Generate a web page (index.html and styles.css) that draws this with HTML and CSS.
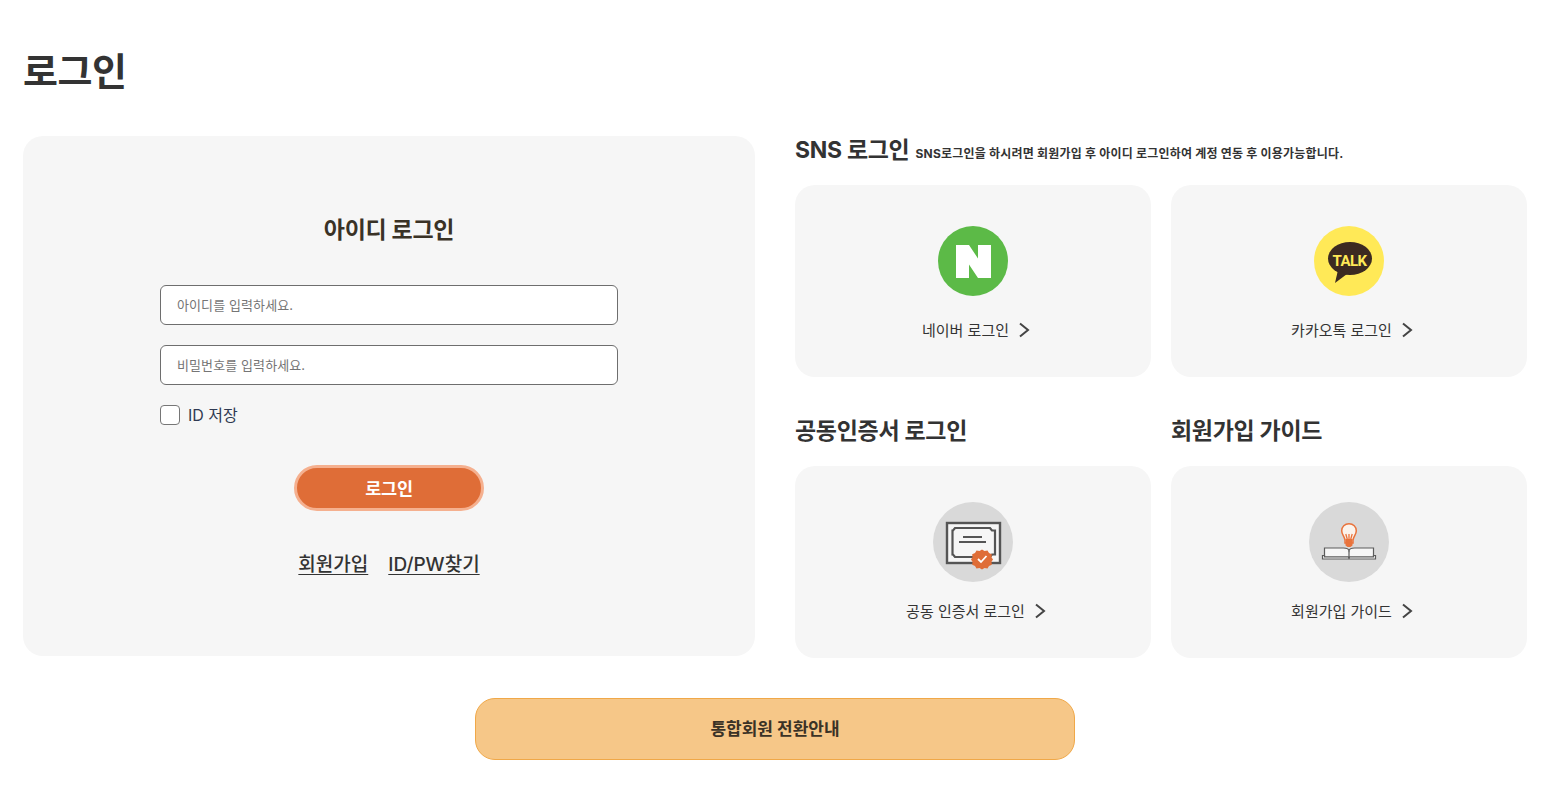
FILE: index.html
```html
<!DOCTYPE html>
<html lang="ko">
<head>
<meta charset="utf-8">
<title>로그인</title>
<link rel="stylesheet" href="styles.css">
</head>
<body>
<main class="page">
  <h1 class="page-title">로그인</h1>
  <div class="columns">
    <section class="login-card">
      <h2 class="login-title">아이디 로그인</h2>
      <form class="login-form">
        <input class="field" type="text" placeholder="아이디를 입력하세요.">
        <input class="field" type="password" placeholder="비밀번호를 입력하세요.">
        <label class="remember"><span class="check"></span><span class="remember-text">ID 저장</span></label>
        <button class="submit" type="button">로그인</button>
        <div class="links"><a href="#">회원가입</a><a href="#">ID/PW찾기</a></div>
      </form>
    </section>
    <section class="side">
      <div class="sns-head"><h2 class="side-title">SNS 로그인</h2><span class="sns-note">SNS로그인을 하시려면 회원가입 후 아이디 로그인하여 계정 연동 후 이용가능합니다.</span></div>
      <div class="tiles">
        <a class="tile" href="#">
          <svg class="logo" viewBox="0 0 70 70"><circle cx="35" cy="35" r="35" fill="#5cba47"/><path d="M18 19h13l9 13.500v-13.500h13v33h-13l-9-13.500v13.500h-13z" fill="#fff"/></svg>
          <span class="tile-label">네이버 로그인<svg class="chev" viewBox="0 0 12 16"><path d="M2 1.500l8 6.500-8 6.500" /></svg></span>
        </a>
        <a class="tile" href="#">
          <svg class="logo" viewBox="0 0 70 70"><circle cx="35" cy="35" r="35" fill="#ffe957"/><ellipse cx="36" cy="32.500" rx="22" ry="16.500" fill="#3c2a21"/><path d="M24 44l-3 13 12-9z" fill="#3c2a21"/><text class="talk" x="35.500" y="40" text-anchor="middle">TALK</text></svg>
          <span class="tile-label">카카오톡 로그인<svg class="chev" viewBox="0 0 12 16"><path d="M2 1.500l8 6.500-8 6.500" /></svg></span>
        </a>
      </div>
      <div class="heads">
        <h2 class="side-title">공동인증서 로그인</h2>
        <h2 class="side-title">회원가입 가이드</h2>
      </div>
      <div class="tiles">
        <a class="tile tile-cert" href="#">
          <svg class="logo-lg" viewBox="0 0 80 80">
            <circle cx="40" cy="40" r="40" fill="#d9d9d9"/>
            <rect x="14" y="21" width="53" height="40" fill="#f6f6f6" stroke="#555" stroke-width="2.400"/>
            <path d="M22 26h35l2 2.500h3v24h-3l-2 2.500h-35l-2-2.500h-.5v-24h.5z" fill="#f6f6f6" stroke="#555" stroke-width="2.200"/>
            <path d="M30 35h19M26 40h27" stroke="#555" stroke-width="2" fill="none"/>
            <path d="M49 47.500l2.500 1.500 3-.5 1.500 2.600 2.800 1.100-.3 3 1.500 2.300-1.500 2.300.3 3-2.800 1.100-1.500 2.600-3-.5-2.500 1.500-2.500-1.500-3 .5-1.500-2.600-2.800-1.100.3-3-1.500-2.300 1.500-2.300-.3-3 2.800-1.100 1.500-2.600 3 .5z" fill="#df6d37"/>
            <path d="M45 57l3 3 5.500-6" fill="none" stroke="#fff" stroke-width="1.800"/>
          </svg>
          <span class="tile-label">공동 인증서 로그인<svg class="chev" viewBox="0 0 12 16"><path d="M2 1.500l8 6.500-8 6.500" /></svg></span>
        </a>
        <a class="tile tile-guide" href="#">
          <svg class="logo-lg" viewBox="0 0 80 80">
            <circle cx="40" cy="40" r="40" fill="#d9d9d9"/>
            <path d="M40 21.800c-4.300 0-7.300 3-7.300 7 0 3.700 2.600 5.300 3.300 9.200v3h8v-3c.7-3.900 3.300-5.500 3.300-9.200 0-4-3-7-7.300-7z" fill="#fbf3ec" stroke="#e9733c" stroke-width="1.500"/>
            <path d="M36.800 32l1.700 6M43.200 32l-1.700 6M40 32v6" stroke="#e9733c" stroke-width="1.300" fill="none"/>
            <path d="M36.500 37h7v6.500l-2 1.500h-3l-2-1.500z" fill="#e9733c"/>
            <path d="M15.500 46h19c3 0 5 .7 5.500 2.500.5-1.800 2.500-2.500 5.500-2.500h19v9h-24.500l-.5 1-.5-1h-23.500z" fill="#f6f6f6" stroke="#5c5c5c" stroke-width="1.200"/>
            <path d="M13.500 53.500h2v1.500h24l.5 1 .5-1h24v-1.500h2v3.500h-53z" fill="#f6f6f6" stroke="#5c5c5c" stroke-width="1.200"/>
            <path d="M40 48.500v8" stroke="#5c5c5c" stroke-width="1.200"/>
          </svg>
          <span class="tile-label">회원가입 가이드<svg class="chev" viewBox="0 0 12 16"><path d="M2 1.500l8 6.500-8 6.500" /></svg></span>
        </a>
      </div>
    </section>
  </div>
  <div class="notice-wrap"><a class="notice" href="#">통합회원 전환안내</a></div>
</main>
</body>
</html>
```
FILE: styles.css
```css
* { box-sizing: border-box; }
html, body { margin: 0; background: #fff; }
body {
  font-family: Inter, "Noto Sans CJK KR", sans-serif;
  color: #333;
  overflow: hidden;
}
a { color: inherit; text-decoration: none; }
h1, h2 { margin: 0; }
.page { padding: 41px 29px 0 23px; }
.page-title {
  font-size: 38px;
  line-height: 60px;
  font-weight: 700;
  height: 95px;
  letter-spacing: -0.4px;
}
.columns { display: grid; grid-template-columns: 732px 732px; column-gap: 40px; }
.login-card {
  background: #f6f6f6;
  border-radius: 20px;
  height: 520px;
  padding-top: 76px;
  display: flex;
  flex-direction: column;
  align-items: center;
}
.login-title { font-size: 23px; line-height: 36px; font-weight: 700; color: #3a3226; letter-spacing: -0.3px; }
.login-form { width: 458px; margin-top: 37px; display: flex; flex-direction: column; }
.field {
  width: 100%;
  height: 40px;
  margin-bottom: 20px;
  padding: 0 16px;
  border: 1px solid #6e6e6e;
  border-radius: 6px;
  background: #fff;
  font: 400 13px Inter, "Noto Sans CJK KR", sans-serif;
  letter-spacing: 0.1px;
}
.field::placeholder { color: #757575; opacity: 1; }
.remember { display: flex; align-items: center; gap: 8px; height: 20px; font-size: 16px; color: #2f3a52; }
.remember-text { padding-bottom: 2px; }
.check { width: 20px; height: 20px; background: #fff; border: 1px solid #767676; border-radius: 4px; }
.submit {
  align-self: center;
  width: 190px;
  height: 46px;
  margin-top: 40px;
  padding: 0 0 2px;
  border: 3px solid #f5b08f;
  border-radius: 23px;
  background: #df6d37;
  color: #fff;
  font: 700 17.500px Inter, "Noto Sans CJK KR", sans-serif;
  letter-spacing: -0.3px;
}
.links {
  display: flex;
  justify-content: center;
  gap: 20px;
  margin-top: 39px;
  font-size: 19px;
  line-height: 30px;
  font-weight: 500;
}
.links a { text-decoration: underline; text-underline-offset: 3px; }
.sns-head { display: flex; align-items: baseline; gap: 6px; height: 49px; line-height: 28px; }
.side-title { font-size: 23px; line-height: 28px; font-weight: 700; color: #333; letter-spacing: -0.3px; }
.sns-note { font-size: 12px; font-weight: 700; color: #333; letter-spacing: 0.2px; }
.tiles { display: grid; grid-template-columns: 356px 356px; column-gap: 20px; }
.tile {
  height: 192px;
  background: #f6f6f6;
  border-radius: 20px;
  display: flex;
  flex-direction: column;
  align-items: center;
  padding-top: 41px;
}
.tile-cert, .tile-guide { padding-top: 36px; }
.logo { width: 70px; height: 70px; flex: none; }
.logo-lg { width: 80px; height: 80px; flex: none; }
.tile-label {
  display: flex;
  align-items: center;
  gap: 9px;
  margin-top: 23px;
  padding-left: 6px;
  font-size: 15px;
  line-height: 24px;
  color: #333;
}
.tile-cert .tile-label, .tile-guide .tile-label { margin-top: 18px; }
.chev { width: 12px; height: 16px; margin-top: -2px; fill: none; stroke: #444; stroke-width: 2; }
.talk { font: 700 15px Roboto, sans-serif; fill: #ffe957; letter-spacing: -0.6px; }
.heads { display: grid; grid-template-columns: 356px 356px; column-gap: 20px; padding-top: 40px; height: 89px; }
.notice-wrap { display: flex; justify-content: center; margin-top: 40px; }
.notice {
  width: 600px;
  height: 62px;
  display: flex;
  align-items: center;
  justify-content: center;
  padding-bottom: 3px;
  background: #f6c788;
  border: 1px solid #f0a848;
  border-radius: 20px;
  font-size: 17px;
  font-weight: 700;
  color: #3a3226;
}
```
